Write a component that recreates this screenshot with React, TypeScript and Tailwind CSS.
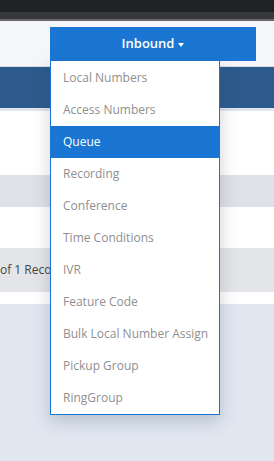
import React from "react";

const items = [
  "Local Numbers",
  "Access Numbers",
  "Queue",
  "Recording",
  "Conference",
  "Time Conditions",
  "IVR",
  "Feature Code",
  "Bulk Local Number Assign",
  "Pickup Group",
  "RingGroup",
];

export default function App() {
  const active = "Queue";
  return (
    <div className="w-[274px] h-[461px] overflow-hidden bg-[#e0e7f1] font-['Open_Sans',sans-serif]">
      {/* window chrome */}
      <div className="h-[12px] bg-[#202124]" />
      <div className="h-[7px] bg-[#37383a]" />
      <div className="h-[2px] bg-[#6a6a6a]" />

      {/* header with menu */}
      <div className="h-[45px] bg-[#f5f6fa] pt-[6px] pl-[50px]">
        <div className="relative w-[206px]">
          <button className="w-full h-[34px] bg-[#1a76d2] text-white text-[13px] font-semibold flex items-center justify-center gap-[4px]">
            Inbound
            <span className="w-0 h-0 border-x-[3.5px] border-x-transparent border-t-[4px] border-t-white mt-[1px]" />
          </button>
          <div className="absolute left-0 top-full z-10 w-[170px] bg-white border border-[#1a76d2] border-t-0 pt-[1px] shadow-[0_6px_16px_rgba(60,70,90,0.25)]">
            {items.map((it) => (
              <div
                key={it}
                className={`h-[32px] flex items-center pl-[12px] text-[12px] whitespace-nowrap ${
                  it === active ? "bg-[#1a76d2] text-white" : "text-[#8f8f8f]"
                }`}
              >
                {it}
              </div>
            ))}
          </div>
        </div>
      </div>

      {/* page body behind menu */}
      <div className="h-[1px] bg-[#d8dce3]" />
      <div className="h-[41px] bg-[#2c5a8c]" />
      <div className="h-[3px] bg-[#dfe5ee]" />
      <div className="h-[64px] bg-white" />
      <div className="h-[32px] bg-[#dfe1e6]" />
      <div className="h-[41px] bg-white" />
      <div className="h-[44px] bg-[#e4e5e9] flex items-center">
        <span className="w-[50px] overflow-hidden text-[12px] text-[#444] whitespace-nowrap">of 1 Records</span>
      </div>
      <div className="h-[12px] bg-white" />
    </div>
  );
}
